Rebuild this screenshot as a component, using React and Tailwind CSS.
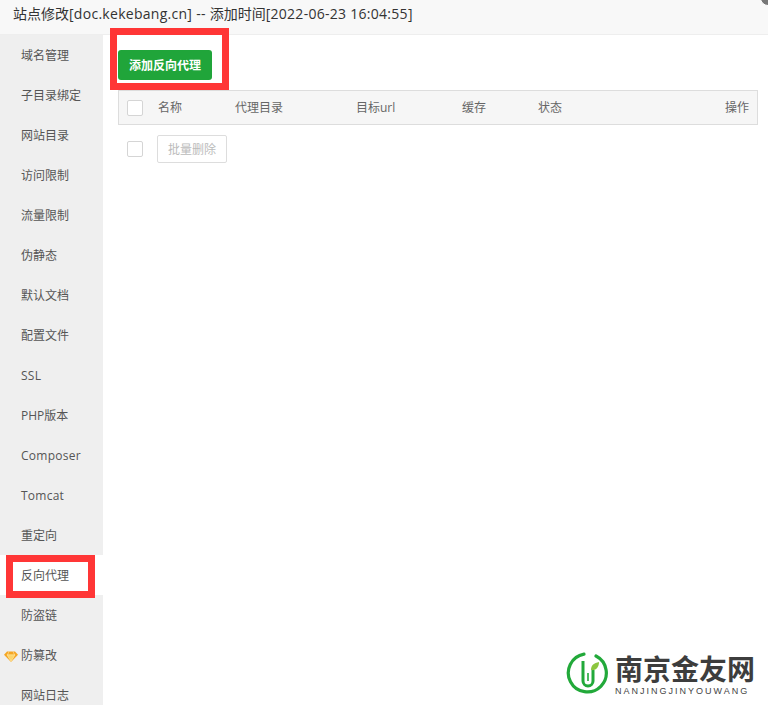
const items = ["域名管理","子目录绑定","网站目录","访问限制","流量限制","伪静态","默认文档","配置文件","SSL","PHP版本","Composer","Tomcat","重定向","反向代理","防盗链","防篡改","网站日志"];
const latinItems = ["SSL", "Composer", "Tomcat"];
const font = { fontFamily: '"Open Sans", "Noto Sans CJK SC", sans-serif' };

function Check() {
  return <span className="block w-4 h-4 bg-white border border-[#d5d5d5] rounded-[2px] shrink-0" />;
}

function Gem() {
  return (
    <svg width="14" height="11" viewBox="0 0 14 11" className="absolute left-[4px] top-[16px]">
      <path d="M3 0.5H11L14 3.8L7 11L0 3.8Z" fill="#f5a623" />
      <path d="M3 3.8H11L7 10.5Z M5 .5L3.5 3.8 M9 .5L10.5 3.8" fill="#fcd56a" stroke="#fff3c4" strokeWidth=".5" />
    </svg>
  );
}

function Logo() {
  return (
    <div className="absolute left-[566px] top-[652px] flex items-start gap-[5px]">
      <svg width="44" height="45" viewBox="0 0 44 45">
        <path d="M30 4A19 19 0 1 1 18 2.2" fill="none" stroke="#22a93a" strokeWidth="3.2" strokeLinecap="round" />
        <path d="M17 9V29A5 5 0 0 0 27 29V18" fill="none" stroke="#22a93a" strokeWidth="3" />
        <path d="M22 21V29" fill="none" stroke="#22a93a" strokeWidth="1.6" />
        <path d="M25 18C25 13 28 11 33 10C33 15 30 19 25 18Z" fill="#8cc63f" />
      </svg>
      <div className="flex flex-col items-start">
        <span className="text-[28px] leading-[32px] font-bold text-[#3d3d3d] whitespace-nowrap" style={{ fontFamily: '"Noto Sans CJK SC", sans-serif' }}>南京金友网</span>
        <span className="text-[9px] leading-[12px] text-[#444] tracking-[2px] mt-[1px] whitespace-nowrap" style={{ fontFamily: '"Liberation Sans", sans-serif' }}>NANJINGJINYOUWANG</span>
      </div>
    </div>
  );
}

export default function App() {
  return (
    <div className="relative w-[768px] h-[705px] overflow-hidden bg-white" style={font}>
      <div className="h-[35px] bg-[#f8f8f8] border-b border-[#eeeeee] pl-[13px] text-[14px] leading-[28px] text-[#333] whitespace-nowrap">
        站点修改<span className="tracking-[0.28px]">[doc.kekebang.cn] -- </span>添加时间<span className="tracking-[0.28px]">[2022-06-23 16:04:55]</span>
      </div>
      <span className="absolute right-[-8px] top-[-10px] w-[16px] h-[16px] rounded-full bg-[#777] border border-white" />
      <div className="flex">
        <div className="w-[103px] h-[670px] bg-[#efefef] shrink-0">
          {items.map((t, i) => (
            <div key={t} className={"relative h-10 pl-[21px] text-[12px] leading-[41px] text-[#555] " + (i === 13 ? "bg-white " : "") + (latinItems.includes(t) ? "tracking-[0.25px]" : "")}>
              {t === "防篡改" && <Gem />}
              {t}
            </div>
          ))}
        </div>
        <div className="flex-1 pl-[15px] pr-[10px] pt-[15px]">
          <button className="block w-[94px] h-[30px] pt-[1px] bg-[#20a53a] rounded-[3px] text-white text-[12px] font-bold">添加反向代理</button>
          <div className="flex items-center h-[35px] mt-[10px] bg-[#f6f6f6] border border-[#dddddd] text-[12px] text-[#666] pl-[8px] pr-[8px]">
            <Check />
            <span className="ml-[15px] w-[77px]">名称</span>
            <span className="w-[121px]">代理目录</span>
            <span className="w-[106px]">目标url</span>
            <span className="w-[76px]">缓存</span>
            <span>状态</span>
            <span className="ml-auto">操作</span>
          </div>
          <div className="flex items-center mt-[10px] pl-[9px]">
            <Check />
            <button className="ml-[14px] w-[70px] h-[28px] pt-[1px] bg-white border border-[#dddddd] rounded-[2px] text-[12px] text-[#bbbbbb]">批量删除</button>
          </div>
        </div>
      </div>
      <div className="absolute left-[110px] top-[28px] w-[119px] h-[62px] border-[7px] border-[#ff3636]" />
      <div className="absolute left-[6px] top-[555px] w-[89px] h-[43px] border-[7px] border-[#ff3636]" />
      <Logo />
    </div>
  );
}
